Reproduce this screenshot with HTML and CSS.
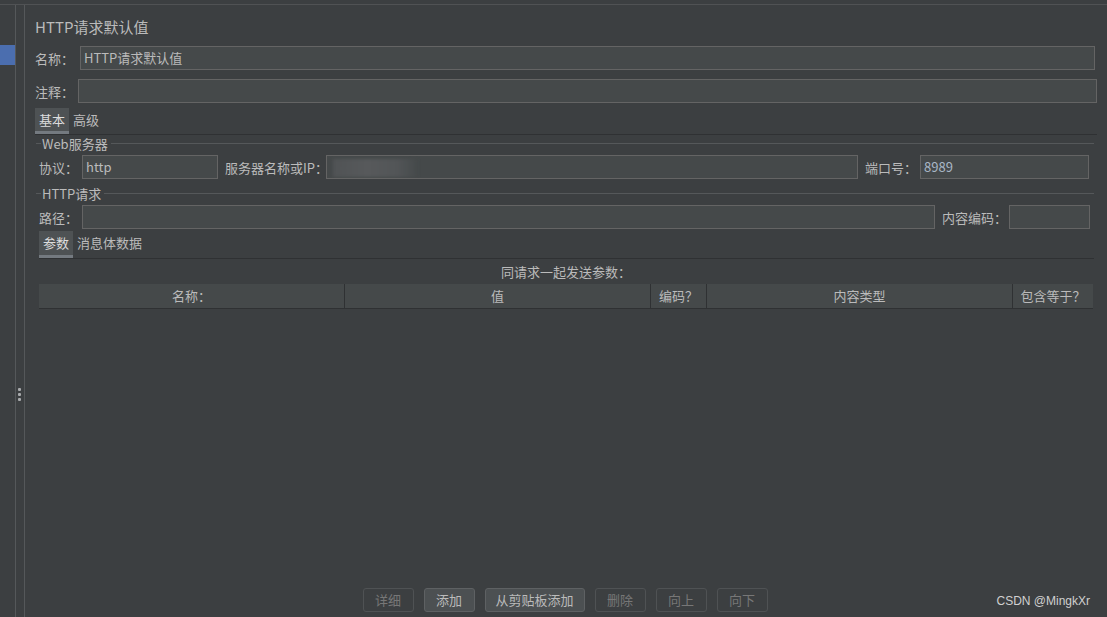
FILE: index.html
```html
<!DOCTYPE html>
<html lang="zh">
<head>
<meta charset="utf-8">
<link rel="stylesheet" href="styles.css">
</head>
<body>
<div class="topbar"></div>
<div class="frame">
  <div class="side">
    <div class="side-sel"></div>
  </div>
  <div class="splitter">
    <svg class="grip" width="4" height="13" viewBox="0 0 4 13"><rect x="0" y="0" width="3" height="3" rx="1" fill="#a9abad"/><rect x="0" y="5" width="3" height="3" rx="1" fill="#a9abad"/><rect x="0" y="10" width="3" height="3" rx="1" fill="#a9abad"/></svg>
  </div>
  <div class="main">
    <div class="title">HTTP请求默认值</div>
    <div class="row row-name">
      <span class="lbl lbl-name">名称：</span>
      <div class="field grow">HTTP请求默认值</div>
    </div>
    <div class="row row-comment">
      <span class="lbl lbl-comment">注释：</span>
      <div class="field grow"></div>
    </div>
    <div class="tabs tabs-top">
      <span class="tab active">基本</span>
      <span class="tab">高级</span>
    </div>
    <div class="group">
      <div class="legend"><span class="lead"></span><span class="legend-text">Web服务器</span><span class="rule"></span></div>
      <div class="row grp-row">
        <span class="lbl lbl-proto">协议：</span>
        <div class="field f-proto">http</div>
        <span class="lbl lbl-server">服务器名称或IP：</span>
        <div class="field f-server"><span class="smudge"></span></div>
        <span class="lbl lbl-port">端口号：</span>
        <div class="field f-port">8989</div>
      </div>
    </div>
    <div class="group group-http">
      <div class="legend"><span class="lead"></span><span class="legend-text">HTTP请求</span><span class="rule"></span></div>
      <div class="row grp-row">
        <span class="lbl lbl-path">路径：</span>
        <div class="field f-path"></div>
        <span class="lbl lbl-enc">内容编码：</span>
        <div class="field f-enc"></div>
      </div>
    </div>
    <div class="tabs tabs-params">
      <span class="tab active">参数</span>
      <span class="tab">消息体数据</span>
    </div>
    <div class="table-caption">同请求一起发送参数：</div>
    <div class="thead">
      <div class="th c-name">名称：</div>
      <div class="th c-val">值</div>
      <div class="th c-enc">编码？</div>
      <div class="th c-type">内容类型</div>
      <div class="th c-eq">包含等于？</div>
    </div>
    <div class="spacer"></div>
    <div class="buttons">
      <span class="btn disabled b-sm">详细</span>
      <span class="btn b-sm">添加</span>
      <span class="btn b-lg">从剪贴板添加</span>
      <span class="btn disabled b-sm">删除</span>
      <span class="btn disabled b-sm b-up">向上</span>
      <span class="btn disabled b-sm">向下</span>
    </div>
    <div class="watermark">CSDN @MingkXr</div>
  </div>
</div>
</body>
</html>
```

FILE: styles.css
```css
* { box-sizing: border-box; }
html, body { margin: 0; padding: 0; }
body {
  width: 1107px;
  height: 617px;
  overflow: hidden;
  background: #3c3f41;
  color: #bbbbbb;
  font-family: "Noto Sans CJK SC", "Noto Sans", sans-serif;
  font-size: 13px;
  display: flex;
  flex-direction: column;
}
.topbar {
  height: 5px;
  border-bottom: 1px solid #505254;
  flex: none;
}
.frame {
  flex: 1;
  display: flex;
  min-height: 0;
}
.side {
  width: 16px;
  border-right: 1px solid #55585a;
  flex: none;
  padding-top: 40px;
}
.side-sel {
  width: 15px;
  height: 20px;
  background: #4b6eaf;
}
.splitter {
  width: 9px;
  border-right: 1px solid #55585a;
  flex: none;
  padding-top: 383px;
  padding-left: 2px;
}
.grip { display: block; }
.main {
  flex: 1;
  position: relative;
  padding: 9px 10px 5px 10px;
  display: flex;
  flex-direction: column;
}
.title {
  font-size: 15px;
  line-height: 26px;
  height: 26px;
  color: #bbbbbb;
}
.row {
  display: flex;
  align-items: center;
}
.lbl { flex: none; white-space: nowrap; }
.field {
  height: 24px;
  border: 1px solid #646464;
  background: #45494a;
  padding: 0 3px;
  line-height: 22px;
  color: #bbbbbb;
  white-space: nowrap;
  overflow: hidden;
}
.grow { flex: 1; }
.row-name { margin-top: 6px; padding-right: 2px; }
.lbl-name { width: 45px; }
.row-comment { margin-top: 9px; }
.lbl-comment { width: 43px; }

.tabs {
  display: flex;
  align-items: stretch;
  border-bottom: 1px solid #2f3133;
  height: 27px;
}
.tabs-top { margin-top: 5px; }
.tab {
  padding: 0 4px;
  line-height: 23px;
  border-bottom: 3px solid transparent;
  color: #bbbbbb;
}
.tab.active {
  background: #4e5254;
  border-bottom-color: #747a80;
  color: #dddddd;
}
.tabs-params { margin: 2px 3px 0 4px; height: 28px; }
.tabs-params .tab { line-height: 24px; }

.group { margin-left: 1px; margin-right: 3px; }
.legend {
  display: flex;
  align-items: center;
  height: 16px;
}
.lead { width: 5px; border-top: 1px solid #55585a; }
.legend-text { padding: 0 1px; }
.rule { flex: 1; border-top: 1px solid #55585a; margin-left: 2px; }
.grp-row { padding-left: 3px; margin-top: 4px; height: 24px; }
.group-http { margin-top: 6px; }

.lbl-proto { width: 43px; }
.f-proto { width: 136px; }
.lbl-server { width: 101px; margin-left: 7px; }
.f-server { width: 532px; position: relative; }
.smudge {
  position: absolute;
  left: 6px;
  top: 3px;
  width: 86px;
  height: 18px;
  background: linear-gradient(90deg, #505355 0%, #57595b 40%, #525557 75%, rgba(80,83,85,0) 100%);
  filter: blur(1.5px);
}
.lbl-port { width: 55px; margin-left: 7px; }
.f-port { width: 169px; color: #a9b7c6; }

.lbl-path { width: 43px; }
.f-path { width: 853px; }
.lbl-enc { width: 67px; margin-left: 7px; }
.f-enc { width: 81px; }

.table-caption {
  text-align: center;
  height: 25px;
  line-height: 25px;
  margin-left: 4px;
  margin-right: 4px;
}
.thead {
  display: flex;
  margin-left: 4px;
  margin-right: 4px;
  height: 25px;
  background: #45494a;
  border-bottom: 1px solid #2f3133;
}
.th {
  text-align: center;
  line-height: 24px;
  border-right: 1px solid #2f3133;
  white-space: nowrap;
}
.th:last-child { border-right: none; }
.c-name { width: 306px; }
.c-val { width: 306px; }
.c-enc { width: 56px; }
.c-type { width: 306px; }
.c-eq { flex: 1; }
.spacer { flex: 1; }
.buttons {
  display: flex;
  justify-content: center;
  gap: 10px;
  padding-right: 2px;
  height: 24px;
}
.btn {
  height: 24px;
  line-height: 22px;
  border: 1px solid #5e6163;
  border-radius: 3px;
  background: #4c5052;
  text-align: center;
  color: #bbbbbb;
}
.b-sm { width: 51px; }
.b-lg { width: 100px; }
.btn.disabled {
  background: transparent;
  border-color: #4f5254;
  color: #777777;
}
.b-up { color: #8a8a8a; }
.watermark {
  position: absolute;
  right: 17px;
  bottom: 9px;
  font-family: "Liberation Sans", Arial, sans-serif;
  font-size: 12px;
  color: #d0d0d0;
}
```
